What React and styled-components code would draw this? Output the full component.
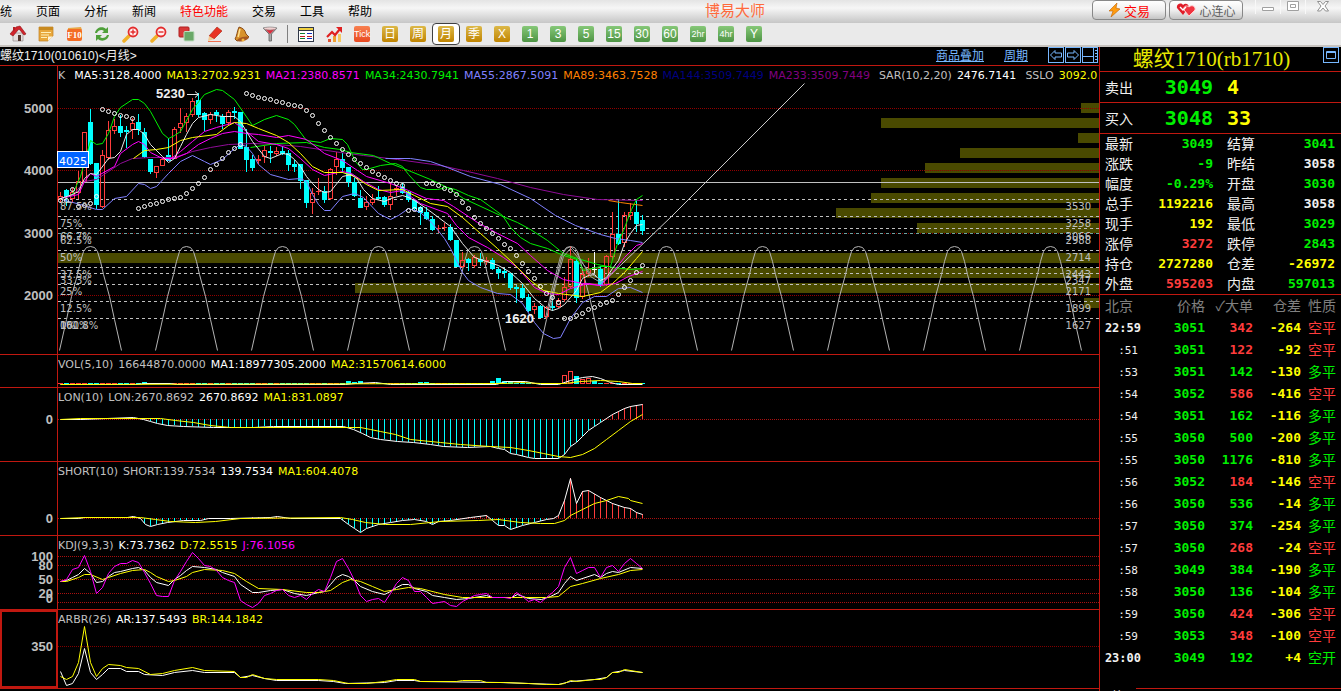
import React, { useState } from "react";
import styled, { createGlobalStyle } from "styled-components";

const RED = "#c01810";
const STEP = 6;
const LEFT = 58;
const px = (i) => 60 + i * STEP;

const menus = ["系统", "页面", "分析", "新闻", "特色功能", "交易", "工具", "帮助"];

const periods = [
  ["日", "gold"],
  ["周", "gold"],
  ["月", "gold"],
  ["季", "gold"],
  ["X", "gold"],
  ["1", "green"],
  ["3", "green"],
  ["5", "green"],
  ["15", "green"],
  ["30", "green"],
  ["60", "green"],
  ["2hr", "green"],
  ["4hr", "green"],
  ["Y", "green"],
];

const C = {
  gray: "#c0c0c0",
  white: "#ffffff",
  yellow: "#ffff00",
  magenta: "#ff00ff",
  green: "#00f000",
  blue: "#8080ff",
  orange: "#ff8000",
  navy: "#000080",
  purple: "#800080",
  cyan: "#00ffff",
  up: "#ff3c3c",
};

// kind, body top, body bottom, high, low
const candles = [
  ["u", 196, 200, 192, 203], ["d", 190, 197, 189, 206], ["u", 192, 199, 188, 203], ["u", 181, 193, 171, 199],
  ["u", 132, 182, 132, 182], ["d", 122, 164, 109, 165], ["d", 163, 205, 163, 209], ["u", 155, 207, 150, 208],
  ["u", 130, 158, 121, 160], ["u", 126, 131, 119, 134], ["d", 126, 133, 115, 137], ["d", 130, 132, 126, 148],
  ["u", 123, 130, 118, 139], ["d", 122, 130, 114, 135], ["d", 132, 157, 128, 158], ["d", 159, 172, 159, 174],
  ["u", 166, 173, 166, 178], ["u", 159, 166, 158, 166], ["d", 155, 161, 138, 161], ["u", 129, 159, 127, 159],
  ["u", 123, 128, 108, 133], ["u", 116, 123, 113, 132], ["u", 101, 115, 98, 117], ["d", 100, 115, 93, 117],
  ["d", 113, 120, 112, 131], ["u", 114, 120, 112, 124], ["d", 112, 115, 110, 122], ["d", 116, 124, 114, 129],
  ["u", 112, 123, 110, 126], ["d", 111, 113, 107, 119], ["d", 112, 149, 112, 149], ["d", 147, 160, 129, 172],
  ["d", 159, 168, 155, 171], ["u", 159, 161, 155, 164], ["u", 150, 157, 146, 163], ["d", 151, 153, 146, 163],
  ["u", 151, 154, 147, 156], ["d", 151, 154, 146, 155], ["d", 153, 165, 150, 171], ["d", 164, 167, 160, 172],
  ["d", 164, 181, 164, 189], ["d", 180, 203, 180, 208], ["u", 193, 203, 188, 214], ["u", 191, 192, 178, 195],
  ["d", 191, 200, 186, 203], ["u", 169, 199, 168, 200], ["u", 159, 167, 152, 175], ["d", 159, 168, 153, 173],
  ["d", 167, 182, 167, 187], ["d", 182, 196, 178, 197], ["d", 198, 208, 190, 208], ["u", 202, 207, 196, 210],
  ["u", 199, 203, 194, 205], ["d", 197, 199, 186, 199], ["d", 197, 205, 196, 207], ["u", 196, 205, 182, 210],
  ["u", 188, 190, 185, 196], ["d", 187, 193, 183, 194], ["d", 192, 200, 191, 202], ["d", 200, 209, 199, 210],
  ["d", 207, 213, 206, 225], ["d", 212, 219, 207, 220], ["d", 219, 230, 216, 231], ["u", 228, 229, 225, 233],
  ["u", 227, 228, 223, 231], ["d", 227, 240, 224, 241], ["d", 240, 267, 240, 267], ["u", 260, 267, 252, 268],
  ["d", 259, 263, 258, 271], ["u", 257, 266, 255, 268], ["d", 259, 262, 253, 266], ["u", 260, 262, 257, 265],
  ["d", 260, 269, 258, 270], ["d", 269, 273, 267, 279], ["d", 271, 273, 268, 278], ["d", 273, 288, 273, 290],
  ["d", 287, 289, 285, 303], ["d", 288, 298, 284, 299], ["d", 297, 311, 294, 312], ["u", 306, 310, 303, 314],
  ["d", 306, 318, 305, 318], ["u", 307, 317, 306, 319], ["d", 306, 308, 297, 311], ["u", 300, 307, 298, 308],
  ["u", 287, 300, 277, 302], ["u", 259, 287, 246, 288], ["d", 261, 298, 259, 303], ["u", 274, 297, 271, 299],
  ["u", 269, 274, 258, 277], ["f", 269, 270, 252, 273], ["d", 269, 285, 266, 287], ["u", 256, 285, 255, 286],
  ["u", 234, 257, 212, 260], ["d", 234, 244, 200, 245], ["u", 215, 243, 212, 247], ["u", 212, 216, 203, 220],
  ["d", 212, 224, 200, 232], ["d", 220, 231, 215, 235],
];

const priceLines = [
  ["#900c98", "60,198 73,194 84,181 96,179 108,171 120,163 132,158 150,157 174,157 192,151 210,147 228,144 252,143 276,144 300,146 340,152 363,155 397,159 440,165 463,170 497,178 530,187 563,194 597,199 642,200"],
  [C.blue, "385,158 410,158 430,161 447,167 470,176 500,184 530,198 555,215 575,225 600,234 615,238 630,240 642,242"],
  [C.orange, "608,200 620,202 642,205"],
  [C.green, "60,199 72,194 80,176 90,140 96,144 102,143 108,133 114,116 120,107 132,99 138,99 144,103 150,111 162,133 168,138 174,135 180,131 192,109 204,94 216,89 222,90 234,99 252,125 264,119 276,115 288,119 294,124 306,140 320,142 330,138 342,139 347,144 355,161 362,169 366,169 380,165 395,163 402,166 408,174 420,187 426,189 437,189 447,187 455,189 468,195 480,199 502,215 510,227 520,237 530,243 547,248 563,255 577,259 583,270 600,266 610,266 617,243 623,230 631,209 636,199 642,195"],
  [C.green, "250,147 276,143 306,142 324,147 340,149 350,152 373,155 390,163 403,168 430,179 447,187 463,198 500,215 517,222 530,229 547,240 563,253 577,258 597,264 613,267 630,269 642,268"],
  [C.magenta, "60,198 78,194 84,181 90,173 96,176 114,166 120,153 132,144 138,141 144,144 150,152 162,158 174,158 186,153 198,144 210,138 222,133 234,131 246,133 258,134 276,137 288,135 306,139 324,153 342,160 357,170 366,176 390,183 408,190 426,198 443,200 453,206 477,222 497,233 517,243 530,255 547,270 563,279 582,283 600,285 615,283 628,276 642,271"],
  [C.magenta, "168,160 180,151 192,141 204,131 216,127 234,122 246,131 258,141 276,144 288,148 300,158 312,169 324,175 342,171 351,173 363,181 378,189 390,192 402,190 420,203 447,213 456,225 468,237 487,247 503,257 517,267 534,287 547,293 558,294 570,288 588,283 600,285 612,272 624,257 636,245 642,243"],
  [C.yellow, "133,158 144,150 156,149 168,147 180,140 192,137 216,134 228,125 234,122 246,123 258,128 276,135 288,142 300,153 312,166 324,172 342,172 354,176 366,184 378,190 402,189 414,195 430,203 447,206 462,217 480,233 497,248 513,263 530,280 543,290 558,293 582,296 600,292 612,283 624,272 636,258 642,251"],
  [C.blue, "61,199 80,204 96,209 102,209 114,198 126,196 138,183 144,184 150,188 156,186 168,173 180,161 192,155 204,161 210,164 222,159 234,148 240,144 246,146 252,153 258,164 270,174 288,179 300,178 306,181 312,194 318,204 324,210 330,210 342,196 354,193 363,197 378,213 390,219 398,215 408,208 420,212 432,223 444,238 450,248 462,272 468,280 480,287 497,293 510,294 522,303 534,322 543,333 553,338 560,337 570,318 582,302 594,296 606,296 618,288 630,287 642,292"],
  ["#e8e8e8", "60,198 72,194 78,191 84,178 90,173 96,174 108,158 114,157 120,151 126,134 132,129 138,129 144,134 150,144 162,156 168,162 174,158 180,146 186,134 192,123 198,117 210,114 222,116 234,116 240,121 246,131 252,141 264,156 270,158 282,153 288,154 294,159 300,166 306,176 312,183 318,189 324,192 330,191 342,176 351,174 357,179 363,189 372,198 384,201 390,198 402,195 408,197 414,200 426,208 438,217 450,226 462,243 474,257 486,261 498,265 510,272 522,283 534,298 546,308 552,310 558,308 564,304 570,297 576,290 582,278 588,275 594,274 600,280 606,277 612,268 618,260 624,243 630,233 636,225 642,224"],
  ["#a0a0a0", "545,318 551,290 560,256 566,248 570,246 576,252 583,264 590,276 600,282 612,272"],
  ["#a0a0a0", "550,308 556,280 563,256 570,248 579,259 590,273 600,279"],
];

// first candle index and the dot heights that follow it
const sarRuns = [
  [0, [200, 200, 189, 206, 205, 203, 196]],
  [7, [109, 111, 113, 115, 116, 118]],
  [13, [208, 206, 204, 203, 201, 199, 198, 197, 193, 188, 183, 177, 169, 164, 158, 152, 148, 144]],
  [31, [93, 95, 97, 98, 99, 101, 102, 104, 105, 106, 110, 115, 123, 130, 137, 143, 149, 154, 159, 163, 167, 171, 174, 177, 180, 183, 185]],
  [58, [210, 209, 209]],
  [61, [183, 183, 185, 188, 190, 194, 202, 208, 217, 223, 228, 233, 238, 244, 248, 255, 263, 271, 278, 286, 293, 297, 302]],
  [84, [318, 318, 315, 313, 309, 307, 304, 302, 300, 294, 287, 280, 272, 265]],
];

const profile = [
  [103, 18], [118, 218], [133, 21], [148, 139], [163, 174], [178, 218], [193, 228],
  [208, 263], [223, 182], [253, 1041], [268, 519], [283, 744], [298, 15],
];

const dashed = [199, 216, 228, 233, 250, 267, 273, 284, 301, 318];

const percents = [
  ["87.5%", 210], ["75%", 227], ["66.7%", 240], ["62.5%", 244], ["50%", 261], ["37.5%", 278],
  ["33.3%", 284], ["25%", 295], ["12.5%", 312], ["0%", 329], ["100%", 329], ["161.8%", 329],
];

const levels = [
  ["3530", 210], ["3258", 227], ["3066", 240], ["2988", 244], ["2714", 261],
  ["2443", 278], ["2347", 284], ["2171", 295], ["1899", 312], ["1627", 329],
];

const arch = [[-31, 350], [-24, 319], [-19, 296], [-13, 274], [-10, 261], [-7, 251], [-4, 247], [0, 246], [4, 247], [7, 251], [10, 261], [13, 274], [19, 296], [24, 319], [31, 350]];

const volume = { 14: 2, 48: 3, 49: 2, 50: 3, 60: 2, 61: 2, 72: 3, 73: 6, 74: 3, 75: 2, 84: 9, 85: 13, 86: 8, 87: 5, 88: 6, 89: 3 };

const lonLine = "60,419 80,419 133,417 143,419 150,421 157,423 167,425 183,426 213,427 253,427 273,426 343,426 353,429 362,433 370,437 380,439 397,441 413,442 430,444 443,446 467,447 490,446 498,448 504,449 510,453 516,454 528,457 534,458 558,458 564,454 570,446 576,442 582,436 588,430 594,426 600,422 606,418 612,414 618,411 624,408 630,406 642,404";
const lonAvg = "60,419 80,418 160,418 175,420 193,422 210,425 230,427 360,427 370,429 380,431 395,434 410,439 440,442 460,444 490,446 510,447 528,450 543,453 558,456 570,457 582,454 594,448 606,439 618,430 630,421 642,414";
const shortLine = "60,518 78,518 84,517 127,517 133,516 140,518 145,524 150,526 157,524 167,522 183,520 200,520 208,518 230,518 270,517 277,516 290,518 340,518 348,524 354,528 360,532 366,528 378,524 390,522 402,520 414,519 426,521 432,524 438,521 450,520 470,517 486,515 492,520 498,525 504,525 510,529 522,525 534,522 546,519 553,518 558,515 564,500 570,478 576,503 582,491 588,490 600,497 612,503 624,507 630,508 636,512 642,514";
const shortAvg = "60,518 84,517 140,517 155,519 170,521 195,522 215,521 240,518 340,517 352,519 365,522 385,524 410,524 440,521 478,520 498,519 520,522 540,523 554,523 564,520 570,515 582,509 594,503 606,500 618,496 628,498 630,500 642,503";
const kLine = "60,581 66,580 72,577 78,574 84,568 90,573 96,582 102,581 108,576 114,572 120,571 132,568 138,567 144,570 150,577 156,582 168,585 174,579 180,575 186,570 192,566 204,567 216,569 222,572 234,576 240,584 252,592 258,592 270,590 282,589 294,593 306,595 318,592 324,591 330,584 336,577 342,574 348,576 354,580 360,586 372,591 384,594 390,591 396,587 402,584 408,584 414,588 426,591 432,595 444,597 456,599 468,598 486,595 492,597 511,597 517,594 528,598 541,599 550,596 558,592 564,583 570,576 576,580 594,574 600,577 606,573 612,571 618,572 630,567 642,568";
const dLine = "60,581 66,581 78,577 84,574 90,574 102,579 108,577 120,573 132,570 144,569 150,572 156,576 168,581 174,580 186,576 192,572 204,569 222,570 234,573 246,581 258,588 282,589 306,592 318,592 330,590 342,582 350,579 360,581 372,586 384,591 396,589 408,587 420,588 444,594 462,597 522,597 546,597 558,596 570,586 582,583 600,578 618,574 630,570 642,569";
const jValues = [581, 579, 569, 567, 555, 571, 593, 587, 573, 566, 563, 563, 560, 562, 572, 583, 595, 596, 596, 580, 571, 561, 552, 558, 565, 566, 570, 577, 580, 582, 600, 604, 607, 603, 595, 593, 590, 589, 595, 597, 595, 599, 593, 589, 591, 577, 561, 558, 568, 580, 595, 601, 599, 598, 602, 593, 583, 577, 580, 591, 591, 597, 603, 602, 601, 605, 606, 601, 598, 595, 594, 593, 597, 597, 597, 598, 592, 596, 601, 599, 602, 597, 592, 586, 567, 557, 573, 570, 567, 567, 577, 567, 565, 571, 563, 558, 563, 568];
const jLine = jValues.map((y, i) => px(i) + "," + y).join(" ");
const brLine = "60,676 66,679 72,676 78,662 84,626 90,662 96,676 102,668 108,664 120,665 126,667 138,668 150,674 162,673 174,670 192,667 204,670 234,671 240,677 246,677 252,674 264,678 276,679 318,679 333,680 348,683 366,683 384,681 396,679 414,679 420,681 456,681 462,680 480,680 486,682 504,682 528,683 546,684 558,684 564,683 570,680 576,681 594,679 600,679 606,677 612,672 618,672 624,669 642,672";
const arLine = "60,671 66,685 72,683 78,673 84,648 90,672 96,679 102,674 108,668 120,668 126,671 138,671 144,674 162,675 174,672 192,670 204,672 234,672 240,677 252,675 264,678 276,680 318,680 333,681 345,683 384,682 396,680 414,680 420,681 500,682 528,683 558,684 570,681 594,679 606,677 612,672 624,670 642,672";

const quotes = [
  ["最新", "3049", "g", "结算", "3041", "g"],
  ["涨跌", "-9", "g", "昨结", "3058", "w"],
  ["幅度", "-0.29%", "g", "开盘", "3030", "g"],
  ["总手", "1192216", "y", "最高", "3058", "w"],
  ["现手", "192", "y", "最低", "3029", "g"],
  ["涨停", "3272", "r", "跌停", "2843", "g"],
  ["持仓", "2727280", "y", "仓差", "-26972", "y"],
  ["外盘", "595203", "r", "内盘", "597013", "g"],
];

const ticks = [
  ["22:59", "3051", "342", "r", "-264", "空平", "r"],
  [":51", "3051", "122", "r", "-92", "空平", "r"],
  [":53", "3051", "142", "g", "-130", "多平", "g"],
  [":54", "3052", "586", "r", "-416", "空平", "r"],
  [":54", "3051", "162", "g", "-116", "多平", "g"],
  [":55", "3050", "500", "g", "-200", "多平", "g"],
  [":55", "3050", "1176", "g", "-810", "多平", "g"],
  [":56", "3052", "184", "r", "-146", "空平", "r"],
  [":56", "3050", "536", "g", "-14", "多平", "g"],
  [":57", "3050", "374", "g", "-254", "多平", "g"],
  [":57", "3050", "268", "r", "-24", "空平", "r"],
  [":58", "3049", "384", "g", "-190", "多平", "g"],
  [":58", "3050", "136", "g", "-104", "多平", "g"],
  [":59", "3050", "424", "r", "-306", "空平", "r"],
  [":59", "3053", "348", "r", "-100", "空平", "r"],
  ["23:00", "3049", "192", "g", "+4", "空开", "g"],
];

const tone = { g: "#00f000", r: "#ff3c3c", y: "#ffff00", w: "#f0f0f0" };

const valueAt = (line, x) => {
  const pts = line.split(" ").map((p) => p.split(",").map(Number));
  const k = pts.findIndex((p) => p[0] >= x);
  if (k <= 0) return pts[0][1];
  const [x0, y0] = pts[k - 1];
  const [x1, y1] = pts[k];
  return Math.round(y0 + ((y1 - y0) * (x - x0)) / (x1 - x0));
};

const Line = ({ points, color }) => (
  <polyline points={points} fill="none" stroke={color} transform="translate(.5 .5)" />
);

const Grid = ({ ys, top, color = "#a81010" }) => (
  <g transform={`translate(0 ${0.5 - top})`} stroke={color} strokeDasharray="1 1">
    {ys.map((y) => (
      <line key={y} x1="0" x2="100%" y1={y} y2={y} />
    ))}
  </g>
);

const Sticks = ({ line, zero, from }) => (
  <g shapeRendering="crispEdges">
    {candles.map((c, i) => {
      const y = valueAt(line, px(i));
      if (i < from || y === zero) return null;
      return (
        <rect key={i} x={px(i)} y={Math.min(y, zero)} width="1" height={Math.abs(y - zero)} fill={y > zero ? C.cyan : C.up} />
      );
    })}
  </g>
);

const Pane = ({ top, height, labels, legend, active, children }) => {
  const origin = top + 18;
  return (
    <PaneRow $h={height}>
      <Axis $active={active}>
        {labels.map(([text, y]) => (
          <text key={text} x="53" y={y + 5 - top} textAnchor="end">{text}</text>
        ))}
      </Axis>
      <PlotArea>
        <Legend>
          {legend.map(([text, color, wide]) => (
            <Item key={text} $color={color} $wide={wide}>{text}</Item>
          ))}
        </Legend>
        <Plot>{children(origin)}</Plot>
      </PlotArea>
    </PaneRow>
  );
};

const Shift = ({ origin, children }) => (
  <g transform={`translate(${-LEFT} ${-origin})`}>{children}</g>
);

const PriceChart = ({ origin }) => (
  <>
    <g transform={`translate(0 ${-origin})`} shapeRendering="crispEdges">
      <svg x="100%" overflow="visible">
        {profile.map(([y, w]) => (
          <rect key={y} x={-w} y={y} width={w} height="10" fill="#4a4a00" />
        ))}
      </svg>
    </g>
    <Grid ys={[108, 170, 233, 295]} top={origin} color="#900000" />
    <g transform={`translate(0 ${0.5 - origin})`} stroke="#c0c0c0">
      {dashed.map((y) => (
        <line key={y} x1="0" x2="100%" y1={y} y2={y} strokeDasharray="3 3" stroke={y === 233 ? "#70a0a0" : "#c0c0c0"} />
      ))}
      <line x1="0" x2="100%" y1="182" y2="182" />
    </g>
    <Shift origin={origin}>
      {Array.from({ length: 11 }, (_, k) => (
        <Line key={k} color="#b4b4b4" points={arch.map(([x, y]) => 90 + k * 96 + x + "," + y).join(" ")} />
      ))}
      <Line color="#c8c8c8" points="600,284 671,216 804,83" />
      <g shapeRendering="crispEdges">
        {candles.map(([kind, t, b, hi, lo], i) => {
          const color = kind === "u" ? C.up : kind === "d" ? C.cyan : C.white;
          return (
            <g key={i} fill={color}>
              <rect x={px(i)} y={hi} width="1" height={Math.max(t - hi, 0)} />
              <rect x={px(i)} y={b} width="1" height={Math.max(lo - b, 0)} />
              {kind === "u" && b - t > 2 ? (
                <rect x={px(i) - 1.5} y={t + 0.5} width="4" height={b - t - 1} fill="none" stroke={color} />
              ) : (
                <rect x={px(i) - 2} y={t} width="5" height={Math.max(b - t, 1)} />
              )}
            </g>
          );
        })}
      </g>
      {priceLines.map(([color, points]) => (
        <Line key={points} color={color} points={points} />
      ))}
      <g fill="none" stroke="#ffffff">
        {sarRuns.map(([start, ys]) =>
          ys.map((y, k) => <circle key={start + k} cx={px(start + k) + 0.5} cy={y + 0.5} r="2" />)
        )}
      </g>
      <g fill="#c0c0c0">
        {percents.map(([text, y]) => (
          <text key={text} x="60" y={y}>{text}</text>
        ))}
      </g>
      <Strong x="156" y="98">5230</Strong>
      <path d="M187 94.500H198M195 91.500L198.500 94.500L195 97.500" stroke="#e0e0e0" fill="none" />
      <Strong x="505" y="323">1620</Strong>
      <rect x="57.500" y="151.500" width="31" height="16" fill="#0064ff" stroke="#ffffff" />
      <Cursor x="59" y="165">4025</Cursor>
    </Shift>
    <g transform={`translate(0 ${-origin})`} fill="#c0c0c0">
      <svg x="100%" overflow="visible">
        {levels.map(([text, y]) => (
          <text key={text} x="-8" y={y} textAnchor="end">{text}</text>
        ))}
      </svg>
    </g>
  </>
);

const VolumeChart = ({ origin }) => (
  <Shift origin={origin}>
    <g shapeRendering="crispEdges">
      {candles.map(([kind], i) => {
        const h = volume[i] || 1;
        const color = kind === "u" ? C.up : C.cyan;
        return kind === "u" && h > 3 ? (
          <rect key={i} x={px(i) - 1.5} y={384.5 - h} width="4" height={h - 1} stroke={color} fill="none" />
        ) : (
          <rect key={i} x={px(i) - 2} y={384 - h} width="5" height={h} fill={color} />
        );
      })}
    </g>
    <Line color="#ffffff" points="60,384 135,384 145,383 170,383 176,384 345,384 355,383 375,382 390,384 496,384 505,381 525,381 540,384 558,384 570,380 582,377 592,376 600,378 610,382 618,384 642,384" />
    <Line color="#ffff00" points="60,384 505,383 520,382 540,383 564,383 580,381 600,380 618,381 632,383 642,383" />
  </Shift>
);

const HomeIcon = () => (
  <svg width="18" height="18" viewBox="0 0 18 18">
    <path d="M4 8h10v8H4z" fill="#e4dede" stroke="#8c8080" strokeWidth=".6" />
    <path d="M9 10h3v6H9z" fill="#54362c" />
    <path d="M1 9L7 2l4-1 6 8-2 1-5-6-6 7z" fill="#d3232c" stroke="#8a1010" strokeWidth=".6" />
    <path d="M4 2h2v3L4 7z" fill="#b42024" />
  </svg>
);

const NoteIcon = () => (
  <svg width="16" height="16" viewBox="0 0 16 16">
    <path d="M1 1h14v9l-5 5H1z" fill="#e8a83c" stroke="#c08020" strokeWidth=".7" />
    <path d="M1 1h14v3H1z" fill="#c88a20" />
    <path d="M3 6.500h10M3 9h8M3 11.500h6" stroke="#fff0b8" />
    <path d="M10 15v-4.500h5z" fill="#fff4d8" />
  </svg>
);

const F10Icon = () => (
  <svg width="17" height="16" viewBox="0 0 17 16">
    <path d="M2 2l13-1 1 3H2z" fill="#e8a848" />
    <rect x="1" y="3" width="15" height="12" rx="2" fill="#f46c24" />
    <text x="8.500" y="12" fontSize="9" fontWeight="700" fontFamily="Liberation Serif, serif" fill="#fff" textAnchor="middle">F10</text>
  </svg>
);

const RefreshIcon = () => (
  <svg width="16" height="16" viewBox="0 0 16 16" fill="#4fa03a">
    <path d="M1 7C2 1 9 0 12 3l2-2v6H8l2-2C8 3 4 4 3 7z" />
    <path d="M15 9c-1 6-8 7-11 4l-2 2V9h6l-2 2c2 2 6 1 7-2z" />
  </svg>
);

const ZoomIcon = ({ plus }) => (
  <svg width="17" height="17" viewBox="0 0 17 17">
    <path d="M2 15l5-5" stroke="#f0b028" strokeWidth="3.500" strokeLinecap="round" />
    <circle cx="11" cy="6" r="4.500" fill="#fff0f0" stroke="#e42c2c" strokeWidth="1.800" />
    <path d={plus ? "M8.500 6h5M11 3.500v5" : "M8.500 6h5"} stroke="#e42c2c" strokeWidth="1.400" />
  </svg>
);

const LayersIcon = () => (
  <svg width="17" height="16" viewBox="0 0 17 16">
    <rect x="1" y="1" width="10" height="10" rx="1" fill="#d83838" stroke="#b02020" />
    <rect x="6" y="5.500" width="10" height="9.500" rx="1" fill="#6aa868" stroke="#c0dcc0" />
  </svg>
);

const PencilIcon = () => (
  <svg width="17" height="17" viewBox="0 0 17 17">
    <path d="M3 10l8-9 5 4-8 8z" fill="#e83424" stroke="#a82010" strokeWidth=".6" />
    <path d="M3 10l5 3-6 2z" fill="#f4c890" />
    <path d="M2 15.500h13" stroke="#f07050" />
  </svg>
);

const BellIcon = () => (
  <svg width="17" height="17" viewBox="0 0 17 17">
    <path d="M5 1c4 1 6 3 7 7l3 3-12 4-2-2c2-3 2-8 4-12z" fill="#d8922c" stroke="#80400c" strokeWidth=".9" />
    <path d="M6 3c-1 3-1 6-2 8" stroke="#ffe090" strokeWidth="1.500" fill="none" />
    <ellipse cx="9" cy="13" rx="6" ry="2" transform="rotate(-15 9 13)" fill="#a85820" />
    <circle cx="9" cy="14" r="1.500" fill="#f4b840" />
  </svg>
);

const FunnelIcon = () => (
  <svg width="16" height="16" viewBox="0 0 16 16">
    <path d="M1 2l6 6v7h2.500V8l5.500-6z" fill="#a8a8a8" stroke="#606060" strokeWidth=".8" />
    <path d="M3 3h10L8 8z" fill="#e02c3c" />
    <ellipse cx="8" cy="2.500" rx="6.500" ry="1.500" fill="#f0d0d0" stroke="#808080" strokeWidth=".6" />
  </svg>
);

const TableIcon = () => (
  <svg width="16" height="16" viewBox="0 0 16 16" shapeRendering="crispEdges">
    <rect x="0" y="1" width="16" height="15" fill="#303848" />
    <rect x="1" y="2" width="14" height="2" fill="#f0d040" />
    <rect x="1" y="5" width="14" height="10" fill="#fff" />
    <path d="M2 7.500h5M2 12.500h5" stroke="#108030" />
    <path d="M9 7.500h5M9 12.500h5" stroke="#1030c0" />
    <path d="M2 10.500h5M9 10.500h5" stroke="#c02020" />
  </svg>
);

const TrendIcon = () => (
  <svg width="17" height="16" viewBox="0 0 17 16">
    <path d="M2 13h3v3H2z" fill="#e05030" />
    <path d="M7 10h3v6H7z" fill="#f0a030" />
    <path d="M12 8h3v8h-3z" fill="#f4c860" />
    <path d="M1 11l5-5 3 3 5-6" stroke="#e02020" strokeWidth="2.200" fill="none" />
    <path d="M10 1h6v6z" fill="#e02020" />
  </svg>
);

const tools = [
  ["首页", HomeIcon], ["公告", NoteIcon], ["F10", F10Icon], ["刷新", RefreshIcon],
  ["放大", () => <ZoomIcon plus />], ["缩小", ZoomIcon], ["叠加", LayersIcon],
  ["画线", PencilIcon], ["预警", BellIcon], ["过滤", FunnelIcon],
];

const Depth = ({ label, price, size }) => (
  <DepthRow>
    <Label>{label}</Label>
    <Big $tone="g">{price}</Big>
    <Big $tone="y" $left>{size}</Big>
  </DepthRow>
);

const App = () => {
  const [period, setPeriod] = useState("月");

  return (
    <Window>
      <GlobalStyle />
      <MenuBar>
        <Menu>
          {menus.map((m) => (
            <MenuButton key={m} $hot={m === "特色功能"}>{m}</MenuButton>
          ))}
        </Menu>
        <Brand>博易大师</Brand>
        <HeaderButtons>
          <HeaderButton $hot>
            <svg width="13" height="14" viewBox="0 0 13 14">
              <path d="M9 0L1 8l4 0-2 6 9-8-4-1z" fill="#ff9c10" stroke="#c06000" strokeWidth=".6" />
            </svg>
            交易
          </HeaderButton>
          <HeaderButton>
            <svg width="20" height="14" viewBox="0 0 20 14">
              <path d="M7 12L1 5c-1-4 4-6 6-3 3-3 7 0 5 3z" fill="#e01c28" />
              <path d="M13 13L8 7c-1-4 3-5 5-3 3-3 7 0 6 3z" fill="#f03440" stroke="#ffd0d0" />
              <path d="M4 4l3 3 3-3" stroke="#fff" strokeWidth="1.400" fill="none" />
            </svg>
            心连心
          </HeaderButton>
        </HeaderButtons>
        <WindowButtons>
          <WindowButton aria-label="最小化">
            <svg width="13" height="12" fill="#fff" stroke="#a0a0a0"><path d="M.5 6.500h11v3H.5z" /></svg>
          </WindowButton>
          <WindowButton aria-label="最大化">
            <svg width="13" height="12" fill="#fff" stroke="#a0a0a0"><path d="M.5 .5h11v9H.5zM3.500 3.500h5v3h-5z" /></svg>
          </WindowButton>
          <WindowButton aria-label="关闭" $last>
            <svg width="13" height="12" fill="#fff" stroke="#909090"><path d="M.5 .5h3l2.500 3 2.500-3h3L8 5l3.500 5h-3L6 7l-2.500 3h-3L4 5z" /></svg>
          </WindowButton>
        </WindowButtons>
      </MenuBar>

      <Toolbar>
        {tools.map(([name, Icon]) => (
          <Tool key={name} aria-label={name}><Icon /></Tool>
        ))}
        <Divider />
        <Tool aria-label="报价"><TableIcon /></Tool>
        <Tool aria-label="走势"><TrendIcon /></Tool>
        <Tool><Badge $tone="tick">Tick</Badge></Tool>
        {periods.map(([name, color]) => (
          <Tool key={name} $active={period === name} onClick={() => setPeriod(name)}>
            <Badge $tone={color} $narrow={name.length > 2}>{name}</Badge>
          </Tool>
        ))}
      </Toolbar>

      <Body>
        <Main>
          <ChartTitle>
            <Symbol>螺纹1710(010610)&lt;月线&gt;</Symbol>
            <TitleLink href="#overlay">商品叠加</TitleLink>
            <TitleLink href="#period">周期</TitleLink>
            <Views>
              <View aria-label="上一个">
                <svg width="14" height="14"><path d="M1.500 7L6 2.500v2.500h6.500v4H6v2.500z" /></svg>
              </View>
              <View aria-label="下一个">
                <svg width="14" height="14"><path d="M12.500 7L8 2.500v2.500H1.500v4H8v2.500z" /></svg>
              </View>
              <View aria-label="布局">
                <svg width="14" height="14"><path d="M0 8.500h10M10.500 0v14M12 2.500h2M12 5.500h2M12 8.500h2M12 11.500h2" /></svg>
              </View>
            </Views>
          </ChartTitle>

          <Pane
            top={66}
            height={289}
            labels={[["5000", 108], ["4000", 170], ["3000", 233], ["2000", 295]]}
            legend={[
              ["K", C.gray],
              ["MA5:3128.4000", C.white, true],
              ["MA13:2702.9231", C.yellow],
              ["MA21:2380.8571", C.magenta],
              ["MA34:2430.7941", C.green],
              ["MA55:2867.5091", C.blue],
              ["MA89:3463.7528", C.orange],
              ["MA144:3509.7449", C.navy],
              ["MA233:3509.7449", C.purple],
              ["SAR(10,2,20)", C.gray, true],
              ["2476.7141", C.white],
              ["SSLO", C.gray, true],
              ["3092.0", C.yellow],
            ]}
          >
            {(origin) => <PriceChart origin={origin} />}
          </Pane>

          <Pane
            top={355}
            height={33}
            labels={[]}
            legend={[["VOL(5,10)", C.gray], ["16644870.0000", C.gray], ["MA1:18977305.2000", C.white], ["MA2:31570614.6000", C.yellow]]}
          >
            {(origin) => <VolumeChart origin={origin} />}
          </Pane>

          <Pane
            top={388}
            height={74}
            labels={[["0", 419]]}
            legend={[["LON(10)", C.gray], ["LON:2670.8692", C.gray], ["2670.8692", C.white], ["MA1:831.0897", C.yellow]]}
          >
            {(origin) => (
              <>
                <Grid ys={[419]} top={origin} />
                <Shift origin={origin}>
                  <Sticks line={lonLine} zero={419} from={14} />
                  <Line color="#ffffff" points={lonLine} />
                  <Line color="#ffff00" points={lonAvg} />
                </Shift>
              </>
            )}
          </Pane>

          <Pane
            top={462}
            height={74}
            labels={[["0", 518]]}
            legend={[["SHORT(10)", C.gray], ["SHORT:139.7534", C.gray], ["139.7534", C.white], ["MA1:604.4078", C.yellow]]}
          >
            {(origin) => (
              <>
                <Grid ys={[518]} top={origin} />
                <Shift origin={origin}>
                  <Sticks line={shortLine} zero={518} from={3} />
                  <Line color="#ffffff" points={shortLine} />
                  <Line color="#ffff00" points={shortAvg} />
                </Shift>
              </>
            )}
          </Pane>

          <Pane
            top={536}
            height={74}
            labels={[["100", 556], ["80", 565], ["50", 579], ["20", 593], ["0", 598]]}
            legend={[["KDJ(9,3,3)", C.gray], ["K:73.7362", C.white], ["D:72.5515", C.yellow], ["J:76.1056", C.magenta]]}
          >
            {(origin) => (
              <>
                <Grid ys={[556, 565, 579, 593, 602]} top={origin} />
                <Shift origin={origin}>
                  <Line color="#ffffff" points={kLine} />
                  <Line color="#ffff00" points={dLine} />
                  <Line color="#ff00ff" points={jLine} />
                </Shift>
              </>
            )}
          </Pane>

          <Pane
            top={610}
            height={79}
            active
            labels={[["350", 646]]}
            legend={[["ARBR(26)", C.gray], ["AR:137.5493", C.white], ["BR:144.1842", C.yellow]]}
          >
            {(origin) => (
              <>
                <Grid ys={[646]} top={origin} color="#800000" />
                <Shift origin={origin}>
                  <Line color="#ffffff" points={arLine} />
                  <Line color="#ffff00" points={brLine} />
                </Shift>
              </>
            )}
          </Pane>
        </Main>

        <Side>
          <Contract>
            <ContractName>螺纹1710(rb1710)</ContractName>
            <View aria-label="展开">
              <svg width="14" height="14"><path d="M2.500 3.500h9v7h-9zM2 4.500h10" /></svg>
            </View>
          </Contract>
          <Depth label="卖出" price="3049" size="4" />
          <Depth label="买入" price="3048" size="33" />
          <Quotes>
            <tbody>
              {quotes.map(([a, av, at, b, bv, bt]) => (
                <tr key={a}>
                  <Name scope="row">{a}</Name>
                  <Num $tone={at} $w={80}>{av}</Num>
                  <Name scope="row" $second>{b}</Name>
                  <Num $tone={bt}>{bv}</Num>
                </tr>
              ))}
            </tbody>
          </Quotes>
          <Ticks>
            <thead>
              <tr>
                <Head $w={41}>北京</Head>
                <Head $w={64} $right>价格</Head>
                <Head $w={48} $right>✓大单</Head>
                <Head $w={48} $right>仓差</Head>
                <Head $w={40} $pad>性质</Head>
              </tr>
            </thead>
            <tbody>
              {ticks.map(([time, price, vol, vt, diff, kind, kt], i) => (
                <tr key={i}>
                  <Time $full={time.length > 3}>{time}</Time>
                  <Num $tone="g">{price}</Num>
                  <Num $tone={vt}>{vol}</Num>
                  <Num $tone="y">{diff}</Num>
                  <Kind $tone={kt}>{kind}</Kind>
                </tr>
              ))}
            </tbody>
          </Ticks>
          <Tabs>
            <Tab>笔</Tab>
            <TabLine />
          </Tabs>
        </Side>
      </Body>
    </Window>
  );
};
export default App;

const GlobalStyle = createGlobalStyle`
  * {
    box-sizing: border-box;
  }
  body {
    margin: 0;
    background: #000000;
    font-family: "Liberation Sans", "Noto Sans CJK SC", sans-serif;
    font-size: 12px;
    overflow: hidden;
  }
  button {
    padding: 0;
    border: 0;
    background: none;
    font-family: inherit;
    font-size: 12px;
    white-space: nowrap;
  }
`;

const Window = styled.div`
  display: flex;
  flex-direction: column;
  height: 100vh;
`;

const MenuBar = styled.header`
  display: flex;
  flex: none;
  height: 23px;
  background: linear-gradient(#e4e4e4, #f6f6f6 35%, #c6c6c6);
`;

const Menu = styled.nav`
  display: flex;
  gap: 24px;
  margin-left: -12px;
`;

const MenuButton = styled.button`
  line-height: 22px;
  color: ${(props) => (props.$hot ? "#ff0000" : "#000000")};
`;

const Brand = styled.div`
  flex: 1;
  padding-left: 6px;
  text-align: center;
  font-size: 15px;
  line-height: 22px;
  color: #ff6a3c;
`;

const HeaderButtons = styled.div`
  display: flex;
  gap: 3px;
`;

const HeaderButton = styled.button`
  display: flex;
  align-items: center;
  justify-content: center;
  gap: 3px;
  width: 74px;
  height: 20px;
  border: 1px solid #888888;
  border-radius: 4px;
  background: linear-gradient(#ffffff, #f0f0f0 50%, #c4c4c4);
  color: ${(props) => (props.$hot ? "#ff0000" : "#606060")};
  font-size: ${(props) => (props.$hot ? "13px" : "12px")};
`;

const WindowButtons = styled.div`
  display: flex;
  margin-left: 12px;
`;

const WindowButton = styled.button`
  display: flex;
  justify-content: center;
  width: ${(props) => (props.$last ? "36px" : "25px")};
  height: 14px;
  padding-top: 1px;
  border-left: 1px solid #f8f8f8;
`;

const Toolbar = styled.div`
  display: flex;
  flex: none;
  height: 24px;
  padding-left: 4px;
  background: #eaeaea;
  border-bottom: 2px solid #c8c4c0;
`;

const Tool = styled.button`
  display: flex;
  align-items: center;
  justify-content: center;
  width: 28px;
  height: 22px;
  border: 1px solid ${(props) => (props.$active ? "#404040" : "transparent")};
  border-radius: 4px;
  background: ${(props) => (props.$active ? "#ffffff" : "none")};
`;

const Divider = styled.div`
  width: 1px;
  height: 18px;
  margin: 2px 4px 0 3px;
  background: #808080;
`;

const badge = {
  gold: "linear-gradient(#dcb848, #c08400)",
  green: "linear-gradient(#86c878, #4e9444)",
  tick: "linear-gradient(#f88050, #e84820)",
};

const Badge = styled.span`
  width: 16px;
  height: 16px;
  border-radius: 2px;
  background: ${(props) => badge[props.$tone]};
  color: #ffffff;
  line-height: 16px;
  text-align: center;
  font-size: ${(props) => (props.$tone === "tick" || props.$narrow ? "9px" : "12px")};
`;

const Body = styled.div`
  display: grid;
  grid-template-columns: minmax(0, 1fr) 241px;
  flex: 1;
  min-height: 0;
`;

const Main = styled.main`
  display: flex;
  flex-direction: column;
  border-right: 1px solid ${RED};
  overflow: hidden;
`;

const ChartTitle = styled.div`
  display: flex;
  flex: none;
  height: 19px;
  padding-right: 1px;
  border-bottom: 1px solid ${RED};
  line-height: 18px;
`;

const Symbol = styled.div`
  flex: 1;
  color: #f0f0f0;
`;

const TitleLink = styled.a`
  margin-right: 20px;
  color: #78b8ff;
`;

const Views = styled.div`
  display: flex;
  gap: 1px;
`;

const View = styled.button`
  width: 16px;
  height: 16px;
  border: 1px solid #78b8ff;
  svg {
    display: block;
    fill: none;
    stroke: #78b8ff;
  }
`;

const PaneRow = styled.section`
  display: flex;
  flex: none;
  height: ${(props) => props.$h}px;
  border-bottom: 1px solid ${RED};
`;

const Axis = styled.svg`
  flex: none;
  width: 58px;
  height: 100%;
  border-right: 1px solid ${RED};
  outline: ${(props) => (props.$active ? `2px solid ${RED}` : "none")};
  outline-offset: -2px;
  font-family: "Liberation Sans", sans-serif;
  font-size: 13px;
  font-weight: 700;
  fill: #c0c0c0;
`;

const PlotArea = styled.div`
  display: flex;
  flex: 1;
  flex-direction: column;
  min-width: 0;
`;

const Legend = styled.div`
  display: flex;
  flex: none;
  gap: 5px;
  height: 18px;
  overflow: hidden;
  font-family: "DejaVu Sans", sans-serif;
  font-size: 11px;
  line-height: 19px;
`;

const Item = styled.span`
  flex: none;
  margin-left: ${(props) => (props.$wide ? "4px" : "0")};
  color: ${(props) => props.$color};
`;

const Plot = styled.svg`
  flex: 1;
  width: 100%;
  min-height: 0;
  overflow: visible;
  font-family: "DejaVu Sans", sans-serif;
  font-size: 10px;
`;

const Strong = styled.text`
  font-family: "Liberation Sans", sans-serif;
  font-size: 13px;
  font-weight: 700;
  fill: #f0f0f0;
`;

const Cursor = styled.text`
  font-size: 11px;
  fill: #ffffff;
`;

const Side = styled.aside`
  display: flex;
  flex-direction: column;
  overflow: hidden;
  color: #f0f0f0;
  font-size: 14px;
`;

const Contract = styled.div`
  display: flex;
  flex: none;
  height: 25px;
  padding-right: 2px;
  border-bottom: 1px solid ${RED};
`;

const ContractName = styled.h1`
  flex: 1;
  margin: 0;
  color: #e8e800;
  font-family: "Liberation Serif", "Noto Sans CJK SC", serif;
  font-size: 21px;
  font-weight: 400;
  line-height: 24px;
  text-align: center;
`;

const DepthRow = styled.div`
  display: flex;
  flex: none;
  align-items: center;
  height: 31px;
  padding-left: 5px;
  border-bottom: 1px solid ${RED};
`;

const Label = styled.span`
  width: 28px;
`;

const Big = styled.span`
  width: 80px;
  padding-left: ${(props) => (props.$left ? "14px" : "0")};
  color: ${(props) => tone[props.$tone]};
  font-family: "DejaVu Sans Mono", monospace;
  font-size: 20px;
  font-weight: 700;
  text-align: ${(props) => (props.$left ? "left" : "right")};
`;

const Quotes = styled.table`
  width: 100%;
  border-collapse: collapse;
  border-bottom: 1px solid ${RED};
  tr {
    height: 20px;
  }
  td:last-child {
    padding-right: 6px;
  }
`;

const Name = styled.th`
  width: ${(props) => (props.$second ? "42px" : "33px")};
  padding: 0 0 0 ${(props) => (props.$second ? "14px" : "5px")};
  font-weight: 400;
  line-height: 20px;
  text-align: left;
`;

const Num = styled.td`
  width: ${(props) => (props.$w ? props.$w + "px" : "auto")};
  padding: 0;
  color: ${(props) => tone[props.$tone]};
  font-family: "DejaVu Sans Mono", monospace;
  font-size: 13px;
  font-weight: 700;
  line-height: 20px;
  text-align: right;
`;

const Ticks = styled.table`
  width: 100%;
  table-layout: fixed;
  border-collapse: collapse;
  tr {
    height: 22px;
  }
`;

const Head = styled.th`
  width: ${(props) => props.$w}px;
  padding: 0 0 0 ${(props) => (props.$right ? "0" : props.$pad ? "7px" : "5px")};
  color: #808080;
  font-weight: 400;
  line-height: 20px;
  text-align: ${(props) => (props.$right ? "right" : "left")};
  white-space: nowrap;
`;

const Time = styled.td`
  padding: 0 ${(props) => (props.$full ? "0" : "3px")} 0 0;
  font-family: "DejaVu Sans Mono", monospace;
  font-size: ${(props) => (props.$full ? "12px" : "11px")};
  font-weight: ${(props) => (props.$full ? "700" : "400")};
  text-align: right;
`;

const Kind = styled.td`
  padding: 0 0 0 7px;
  color: ${(props) => tone[props.$tone]};
  line-height: 20px;
`;

const Tabs = styled.div`
  display: flex;
  flex: none;
  height: 24px;
  margin-top: 18px;
`;

const Tab = styled.button`
  width: 36px;
  height: 16px;
  color: #f0f0f0;
`;

const TabLine = styled.div`
  flex: 1;
  margin-top: 1px;
  border-top: 1px solid ${RED};
`;
